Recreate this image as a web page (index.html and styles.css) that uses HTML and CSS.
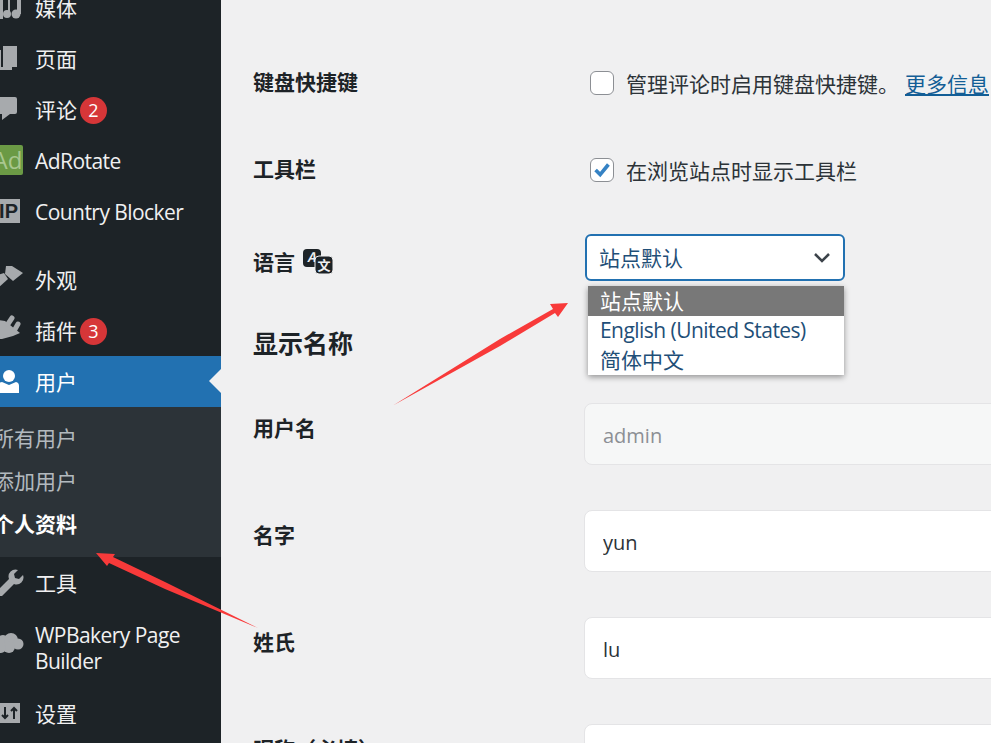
FILE: index.html
```html
<!DOCTYPE html>
<html lang="zh-CN">
<head>
<meta charset="utf-8">
<title>个人资料</title>
<link rel="stylesheet" href="styles.css">
</head>
<body>
<div class="app">
  <nav class="side">
    <ul class="menu">
      <li class="item first"><span class="ico"><svg viewBox="0 0 35 30" width="35" height="30"><path class="f" d="M-3 6h6v21h-6z"/><circle class="f" cx="7" cy="22" r="4"/><circle class="f" cx="16" cy="22" r="4.500"/><path class="f" d="M8 4h2v18h-2zM17 4h4v18h-4zM8 4h13v3h-13z"/></svg></span>媒体</li>
      <li class="item"><span class="ico"><svg viewBox="0 0 35 30" width="35" height="30"><path class="f" d="M-3 7h4v17h11v3h-15z"/><path class="f" d="M3 3h14v21h-14z"/></svg></span>页面</li>
      <li class="item"><span class="ico"><svg viewBox="0 0 35 30" width="35" height="30"><path class="f" d="M-3 3h18a2 2 0 0 1 2 2v13a2 2 0 0 1-2 2h-5l-8 6v-6h-5z"/></svg></span>评论<b class="badge">2</b></li>
      <li class="item"><span class="ico"><span class="ad">Ad</span></span><span class="latin">AdRotate</span></li>
      <li class="item"><span class="ico"><span class="ip">IP</span></span><span class="latin">Country Blocker</span></li>
      <li class="item gap"><span class="ico"><svg viewBox="0 0 35 30" width="35" height="30"><path class="f" d="M6 2h6l11 7-10 8-8-7z"/><path class="f" d="M-2 11l6-2 4 6-10 9z"/></svg></span>外观</li>
      <li class="item"><span class="ico"><svg viewBox="0 0 35 30" width="35" height="30"><path class="f" d="M-2 5l7 1 15 12-7 3-11 3h-4z"/><path class="s" d="M8 9l4-6M14 16l4-7"/></svg></span>插件<b class="badge">3</b></li>
      <li class="item active"><span class="ico"><svg viewBox="0 0 35 30" width="35" height="30"><circle class="w" cx="9" cy="10" r="6"/><path class="w" d="M-3 27v-6a5 5 0 0 1 5-5l7 3 7-3a4 4 0 0 1 3 4v7z"/></svg></span>用户<i class="caret"></i></li>
      <li class="sub">
        <a class="subitem">所有用户</a>
        <a class="subitem">添加用户</a>
        <a class="subitem on">个人资料</a>
      </li>
      <li class="item"><span class="ico"><svg viewBox="0 0 35 30" width="35" height="30"><path class="f" d="M-3 24l12-12a7 7 0 0 1 9-9l-4 4 1 4 4 1 4-4a7 7 0 0 1-9 9l-12 12h-4z"/></svg></span>工具</li>
      <li class="item tall"><span class="ico up"><svg viewBox="0 0 35 30" width="35" height="30"><circle class="f" cx="3" cy="17" r="6"/><circle class="f" cx="11" cy="16" r="7"/><circle class="f" cx="18" cy="20" r="5.500"/><circle class="f" cx="9" cy="23" r="6"/><circle class="f" cx="1" cy="24" r="5"/></svg></span><span class="latin">WPBakery Page Builder</span></li>
      <li class="item"><span class="ico"><svg viewBox="0 0 35 30" width="35" height="30"><path class="f" d="M-2 5h22v20h-22z"/><path class="d" d="M5 9v11M2 17l3 3 3-3M14 21v-11M11 13l3-3 3 3"/></svg></span>设置</li>
    </ul>
  </nav>
  <main class="main">
    <div class="row r1">
      <div class="label">键盘快捷键</div>
      <div class="check"><span class="box"></span><span>管理评论时启用键盘快捷键。</span><a class="more">更多信息</a></div>
    </div>
    <div class="row r2">
      <div class="label">工具栏</div>
      <div class="check"><span class="box"><svg viewBox="0 0 24 24" width="22" height="22"><path class="tick" d="M5 12l5 5 9-11"/></svg></span><span>在浏览站点时显示工具栏</span></div>
    </div>
    <div class="row r3">
      <div class="label">语言 <svg class="lang" viewBox="0 0 30 26" width="30" height="26"><rect x="0" y="1" width="18" height="18" rx="4"/><text class="glyph" x="8.500" y="14" text-anchor="middle" font-size="13" font-style="italic">A</text><rect class="ring" x="12" y="8" width="18" height="18" rx="4"/><text class="glyph" x="21" y="22" text-anchor="middle" font-size="13">文</text></svg></div>
      <div class="selwrap">
        <div class="select"><span class="seltext">站点默认</span><svg viewBox="0 0 16 10" width="16" height="10"><path class="chev" d="M1 1l7 7 7-7"/></svg></div>
        <ul class="drop">
          <li class="opt sel">站点默认</li>
          <li class="opt latin">English (United States)</li>
          <li class="opt">简体中文</li>
        </ul>
      </div>
    </div>
    <h2 class="head">显示名称</h2>
    <div class="row field">
      <div class="label">用户名</div>
      <input class="input off" type="text" value="admin" disabled>
    </div>
    <div class="row field">
      <div class="label">名字</div>
      <input class="input" type="text" value="yun">
    </div>
    <div class="row field">
      <div class="label">姓氏</div>
      <input class="input" type="text" value="lu">
    </div>
    <div class="row field">
      <div class="label">昵称（必填）</div>
      <input class="input" type="text">
    </div>
  </main>
  <svg class="arrows" viewBox="0 0 991 743" width="991" height="743">
    <path class="arrow" d="M393 405.500L500 339L553 309L550 304L568 303L558 317L555 313L500 346Z"/>
    <path class="arrow" d="M258 628L165 582L113 557L115 554L96 553L107 566L109 563L165 589Z"/>
  </svg>
</div>
</body>
</html>
```
FILE: styles.css
```css
* { box-sizing: border-box; }
html, body { margin: 0; padding: 0; height: 100%; overflow: hidden; }
body {
  font-family: "Noto Sans CJK SC", "Open Sans", sans-serif;
  font-size: 21px;
  color: #2c3338;
  background: #f0f0f1;
}
ul { list-style: none; margin: 0; padding: 0; }

.app { position: relative; display: flex; width: 991px; height: 743px; overflow: hidden; }

.side { flex: none; width: 221px; background: #1d2327; overflow: hidden; color: #f0f0f1; }
.menu { margin-top: -18px; }
.item { position: relative; display: flex; align-items: center; height: 51px; line-height: 26px; padding-bottom: 2px; }
.item.gap { margin-top: 17px; }
.item.tall { height: 80px; }
.item.tall .latin { width: 170px; }
.ico { flex: none; width: 35px; height: 30px; display: block; position: relative; }
.ico.up { margin-top: -16px; }
.ico svg { display: block; overflow: visible; }
.latin { font-family: "Open Sans", "Noto Sans CJK SC", sans-serif; letter-spacing: -0.55px; }
.item .latin { margin-top: 2px; }
.f { fill: #a7aaad; }
.w { fill: #fff; }
.s { stroke: #a7aaad; stroke-width: 5; fill: none; stroke-linecap: round; }
.d { stroke: #1d2327; stroke-width: 2; fill: none; }
.ad {
  position: absolute; left: -8px; top: 0; width: 31px; height: 30px;
  background: #6b9a45; color: #a9c78f; border-radius: 2px;
  font: 24px/30px "Open Sans", sans-serif; text-align: center;
}
.ip {
  position: absolute; left: -8px; top: 3px; width: 28px; height: 24px;
  background: #a7aaad; color: #1d2327; text-align: right; padding-right: 2px;
  font: bold 20px/24px "Liberation Sans", sans-serif;
}
.badge {
  display: block; width: 27px; height: 27px; border-radius: 50%;
  background: #d63638; color: #fff; margin: 3px 0 0 3px;
  font: 400 18px/27px "Open Sans", sans-serif; text-align: center;
}
.active { background: #2271b1; color: #fff; }
.caret {
  position: absolute; right: 0; top: 13px;
  border: 12px solid transparent; border-left-width: 0; border-right-color: #f0f0f1;
}
.sub { background: #2c3338; height: 150px; padding-top: 9px; }
.subitem { display: block; height: 43px; line-height: 43px; margin-left: -7px; color: rgba(240, 246, 252, .7); }
.subitem.on { color: #fff; font-weight: 700; }

.main { flex: 1; min-width: 0; padding: 40px 0 0 33px; overflow: hidden; background: #f0f0f1; }
.row { display: grid; grid-template-columns: 330px 1fr; align-items: center; }
.r1 { height: 86px; }
.r2 { height: 88px; }
.r3 { height: 96px; align-items: start; }
.label { font-weight: 700; color: #1d2327; line-height: 30px; display: flex; align-items: center; gap: 8px; white-space: nowrap; margin: 0 0 4px -1px; }
.r3 .label { margin: 32px 0 0 -1px; }
.check { display: flex; align-items: center; padding-left: 6px; white-space: nowrap; }
.box {
  flex: none; width: 24px; height: 24px; margin-right: 12px; background: #fff;
  border: 1px solid #8c8f94; border-radius: 6px; display: flex; align-items: center; justify-content: center;
}
.tick { fill: none; stroke: #3582c4; stroke-width: 4; }
.more { margin-left: 6px; color: #135e96; text-decoration: underline; }
.lang { fill: #1d2327; }
.ring { stroke: #f0f0f1; stroke-width: 1; }
.glyph { fill: #f0f0f1; font-family: "Noto Sans CJK SC", sans-serif; font-weight: 700; }

.selwrap { position: relative; margin: 20px 0 0 1px; }
.select {
  width: 260px; height: 47px; display: flex; align-items: center; justify-content: space-between;
  padding: 0 13px 0 12px; background: #fff; border: 2px solid #2271b1; border-radius: 6px; color: #1f4f78;
}
.seltext { margin-bottom: 1px; }
.chev { fill: none; stroke: #3c434a; stroke-width: 2.500; }
.drop {
  position: absolute; left: 3px; top: 52px; width: 256px; z-index: 2;
  background: #fff; color: #1f4f78; box-shadow: 0 2px 6px rgba(0, 0, 0, .4);
}
.opt { height: 29.500px; line-height: 29.500px; padding-left: 12px; white-space: nowrap; }
.opt.sel { background: #787878; color: #fff; }

.head { margin: 0 0 0 -1px; height: 68px; padding-bottom: 4px; display: flex; align-items: center; font-size: 25px; font-weight: 700; color: #1d2327; }
.field { height: 107px; align-items: start; padding-top: 25px; }
.field .label { margin-top: 9px; }
.input {
  display: block; width: 500px; height: 62px; padding: 2px 18px 0;
  background: #fff; border: 1px solid #e4e4e6; border-radius: 8px;
  font: 20px "Open Sans", sans-serif; color: #2c3338; outline: none;
}
.input.off { background: #f6f7f7; color: #8c8f94; }

.arrows { position: absolute; left: 0; top: 0; pointer-events: none; z-index: 3; }
.arrow { fill: #f83a3a; }
```
